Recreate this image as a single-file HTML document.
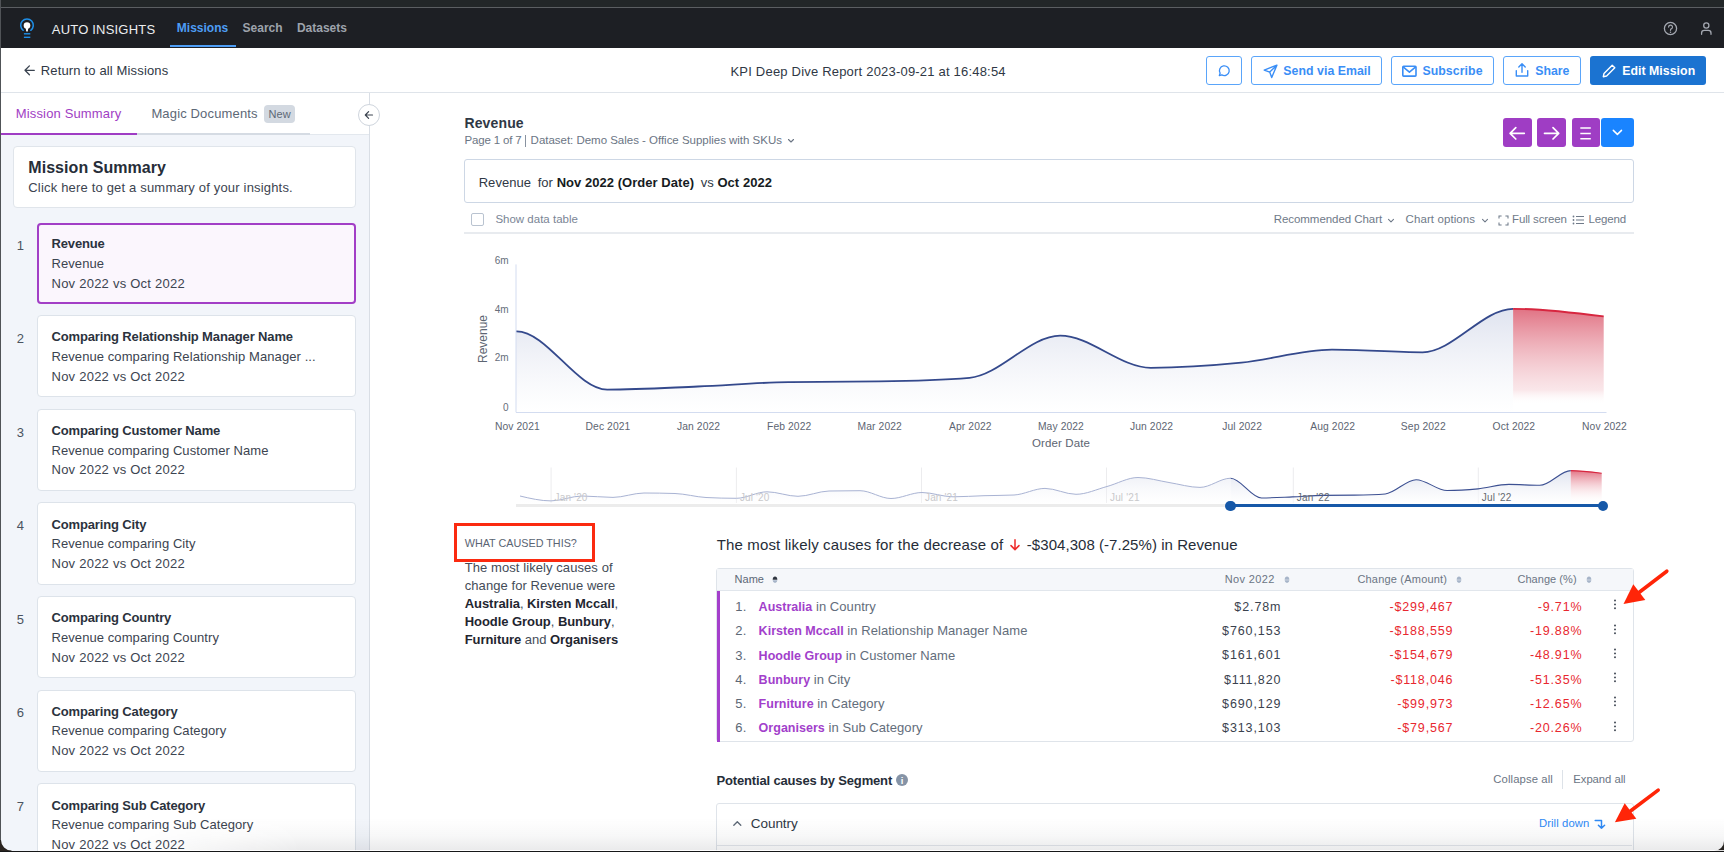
<!DOCTYPE html>
<html><head><meta charset="utf-8"><title>Auto Insights</title>
<style>
html,body{margin:0;padding:0;width:1724px;height:852px;overflow:hidden;background:#2a2622}
body{position:relative;font-family:"Liberation Sans", sans-serif}
.r{position:absolute;display:block}
.t{position:absolute;white-space:nowrap;line-height:1;font-family:"Liberation Sans", sans-serif}
b{font-weight:bold}
</style></head><body>
<div class="r" style="left:0.00px;top:0.00px;width:1724.00px;height:852.00px;background:#2a2622"></div>
<div class="r" style="left:0.00px;top:0.00px;width:1724.00px;height:7.00px;background:#222628"></div>
<div class="r" style="left:0.00px;top:7.00px;width:1724.00px;height:1.00px;background:#5b5e62"></div>
<div class="r" style="left:1.00px;top:8.00px;width:1723.00px;height:843.00px;background:#ffffff;border-bottom-left-radius:10px;border-bottom-right-radius:10px;overflow:hidden"></div>
<div class="r" style="left:0.00px;top:8.00px;width:1724.00px;height:40.00px;background:#1d1f24"></div>
<div class="r" style="left:0.00px;top:0.00px;width:1.00px;height:852.00px;background:#505357"></div>
<svg class="r" style="left:17.00px;top:16.00px;" width="20.00" height="24.00" viewBox="0 0 20.00 24.00"><path d="M6.2,14.3 A6.3,6.3 0 1 1 13.8,14.3" fill="none" stroke="#1e8fe8" stroke-width="1.5" stroke-linecap="round"/><circle cx="10" cy="9.6" r="3.3" fill="#fff"/><path d="M8.6,11.5 L11.4,11.5 L10.7,15.4 L9.3,15.4 Z" fill="#fff"/><rect x="6.9" y="17.1" width="6.4" height="1.4" fill="#1e8fe8"/><rect x="6.9" y="20.6" width="6.4" height="1.4" fill="#1e8fe8"/></svg>
<div class="t" style="left:51.80px;top:22.70px;font-size:13.00px;color:#eceef0;font-weight:normal;letter-spacing:0.200px;">AUTO INSIGHTS</div>
<div class="t" style="left:176.80px;top:21.84px;font-size:12.00px;color:#4d9df5;font-weight:bold;letter-spacing:0.000px;">Missions</div>
<div class="r" style="left:170.00px;top:45.30px;width:66.00px;height:2.00px;background:#4d9df5"></div>
<div class="t" style="left:242.60px;top:21.84px;font-size:12.00px;color:#9ea3ac;font-weight:bold;letter-spacing:0.000px;">Search</div>
<div class="t" style="left:296.90px;top:21.84px;font-size:12.00px;color:#9ea3ac;font-weight:bold;letter-spacing:0.000px;">Datasets</div>
<svg class="r" style="left:1662.00px;top:20.00px;" width="18.00" height="18.00" viewBox="0 0 18.00 18.00"><circle cx="8.5" cy="8.5" r="6.1" fill="none" stroke="#a4a8b1" stroke-width="1.3"/><path d="M6.6,7.1 A1.95,1.95 0 1 1 9.2,8.9 C8.6,9.2 8.5,9.6 8.5,10.3" fill="none" stroke="#a4a8b1" stroke-width="1.2" stroke-linecap="round"/><circle cx="8.5" cy="12.2" r="0.75" fill="#a4a8b1"/></svg>
<svg class="r" style="left:1698.00px;top:18.00px;" width="18.00" height="20.00" viewBox="0 0 18.00 20.00"><circle cx="8.3" cy="7.5" r="2.6" fill="none" stroke="#a4a8b1" stroke-width="1.3"/><path d="M3.6,16.3 V15 C3.6,13.2 4.6,12.4 6.3,12.4 H10.3 C12,12.4 13,13.2 13,15 V16.3" fill="none" stroke="#a4a8b1" stroke-width="1.3" stroke-linecap="round"/></svg>
<svg class="r" style="left:23.00px;top:64.00px;" width="14.00" height="13.00" viewBox="0 0 14.00 13.00"><path d="M11.3,6.3 H2 M6.4,1.9 L2,6.3 L6.4,10.7" fill="none" stroke="#3a4350" stroke-width="1.3" stroke-linecap="round" stroke-linejoin="round"/></svg>
<div class="t" style="left:40.80px;top:64.40px;font-size:13.00px;color:#2f3845;font-weight:normal;letter-spacing:0.150px;">Return to all Missions</div>
<div class="t" style="left:730.50px;top:64.50px;font-size:13.00px;color:#2f3845;font-weight:normal;letter-spacing:0.200px;">KPI Deep Dive Report 2023-09-21 at 16:48:54</div>
<div class="r" style="left:1.00px;top:92.00px;width:1723.00px;height:1.00px;background:#dfe4ea"></div>
<div class="r" style="left:1206.20px;top:56.30px;width:35.80px;height:28.50px;box-sizing:border-box;border:1px solid #5aa5fa;border-radius:3px;background:#fff"></div>
<svg class="r" style="left:1216.40px;top:64.00px;" width="15.00" height="15.00" viewBox="0 0 15.00 15.00"><path d="M3.3,11.6 L4.1,9.2 A4.9,4.9 0 1 1 5.8,10.9 Z" fill="none" stroke="#3a8ef6" stroke-width="1.3" stroke-linejoin="round"/></svg>
<div class="r" style="left:1251.00px;top:56.30px;width:130.70px;height:28.50px;box-sizing:border-box;border:1px solid #5aa5fa;border-radius:3px;background:#fff"></div>
<svg class="r" style="left:1262.00px;top:62.00px;" width="17.00" height="17.00" viewBox="0 0 17.00 17.00"><path d="M14.9,3.2 L2.2,8.1 L7.7,10.1 L9.7,15.5 Z M14.9,3.2 L7.7,10.1" fill="none" stroke="#3a8ef6" stroke-width="1.4" stroke-linejoin="round"/></svg>
<div class="t" style="left:1283.30px;top:65.29px;font-size:12.30px;color:#3a8ef6;font-weight:bold;letter-spacing:0.050px;">Send via Email</div>
<div class="r" style="left:1390.80px;top:56.30px;width:103.00px;height:28.50px;box-sizing:border-box;border:1px solid #5aa5fa;border-radius:3px;background:#fff"></div>
<svg class="r" style="left:1401.00px;top:63.00px;" width="17.00" height="15.00" viewBox="0 0 17.00 15.00"><rect x="1.8" y="3.2" width="13.2" height="9.9" rx="0.8" fill="none" stroke="#3a8ef6" stroke-width="1.6"/><path d="M2.1,3.9 L8.4,9.1 L14.7,3.9" fill="none" stroke="#3a8ef6" stroke-width="1.6" stroke-linejoin="round"/></svg>
<div class="t" style="left:1422.40px;top:65.29px;font-size:12.30px;color:#3a8ef6;font-weight:bold;letter-spacing:0.080px;">Subscribe</div>
<div class="r" style="left:1503.30px;top:56.30px;width:78.00px;height:28.50px;box-sizing:border-box;border:1px solid #5aa5fa;border-radius:3px;background:#fff"></div>
<svg class="r" style="left:1514.00px;top:62.00px;" width="16.00" height="16.00" viewBox="0 0 16.00 16.00"><path d="M8,10.3 V2 M4.8,5 L8,1.8 L11.2,5 M2.3,8.6 V14 H13.7 V8.6" fill="none" stroke="#3a8ef6" stroke-width="1.4" stroke-linecap="round" stroke-linejoin="round"/></svg>
<div class="t" style="left:1535.20px;top:65.29px;font-size:12.30px;color:#3a8ef6;font-weight:bold;letter-spacing:0.000px;">Share</div>
<div class="r" style="left:1590.30px;top:56.30px;width:116.10px;height:28.50px;border-radius:3px;background:#1b73d1"></div>
<svg class="r" style="left:1601.30px;top:63.00px;" width="16.00" height="16.00" viewBox="0 0 16.00 16.00"><path d="M11.2,2.2 L13.8,4.8 L5.6,13 L2.3,13.7 L3,10.4 Z" fill="none" stroke="#fff" stroke-width="1.4" stroke-linejoin="round"/></svg>
<div class="t" style="left:1622.20px;top:65.29px;font-size:12.30px;color:#ffffff;font-weight:bold;letter-spacing:0.050px;">Edit Mission</div>
<div class="r" style="left:1.00px;top:93.00px;width:368.00px;height:758.00px;background:#f2f5fa"></div>
<div class="r" style="left:1.00px;top:93.00px;width:368.00px;height:41.50px;background:#ffffff"></div>
<div class="r" style="left:1.00px;top:134.00px;width:368.00px;height:1.00px;background:#e3e8ee"></div>
<div class="r" style="left:1.00px;top:133.00px;width:308.50px;height:2.00px;background:#d5dbe3"></div>
<div class="r" style="left:1.00px;top:133.00px;width:136.00px;height:2.00px;background:#9f3dc4"></div>
<div class="r" style="left:369.00px;top:93.00px;width:1.00px;height:758.00px;background:#d9dee5"></div>
<div class="t" style="left:15.80px;top:106.70px;font-size:13.00px;color:#9f3dc4;font-weight:normal;letter-spacing:0.150px;">Mission Summary</div>
<div class="t" style="left:151.40px;top:106.80px;font-size:13.00px;color:#5d6876;font-weight:normal;letter-spacing:0.150px;">Magic Documents</div>
<div class="r" style="left:263.80px;top:105.30px;width:31.00px;height:17.60px;background:#d3d9e1;border-radius:4px"></div>
<div class="t" style="left:268.50px;top:108.69px;font-size:11.00px;color:#5d6876;font-weight:normal;letter-spacing:0.100px;">New</div>
<div class="r" style="left:357.80px;top:103.60px;width:22.00px;height:22.00px;box-sizing:border-box;border:1px solid #cfd5dd;border-radius:50%;background:#fff"></div>
<svg class="r" style="left:362.00px;top:108.00px;" width="14.00" height="14.00" viewBox="0 0 14.00 14.00"><path d="M10.5,7 H3.3 M6.6,3.7 L3.3,7 L6.6,10.3" fill="none" stroke="#3c4450" stroke-width="1.2" stroke-linecap="round" stroke-linejoin="round"/></svg>
<div class="r" style="left:13.30px;top:146.40px;width:343.00px;height:62.00px;box-sizing:border-box;border:1px solid #e0e5eb;border-radius:4px;background:#fff"></div>
<div class="t" style="left:28.30px;top:159.76px;font-size:16.00px;color:#262d38;font-weight:bold;letter-spacing:0.050px;">Mission Summary</div>
<div class="t" style="left:28.30px;top:181.10px;font-size:13.00px;color:#3c4450;font-weight:normal;letter-spacing:0.180px;">Click here to get a summary of your insights.</div>
<div class="r" style="left:37.00px;top:222.90px;width:319.20px;height:80.90px;box-sizing:border-box;border:2px solid #a23fc6;border-radius:4px;background:#fbf6fd"></div>
<div class="t" style="left:16.80px;top:238.80px;font-size:13.00px;color:#4a5360;font-weight:normal;letter-spacing:0.000px;">1</div>
<div class="t" style="left:51.50px;top:237.30px;font-size:13.00px;color:#2b323d;font-weight:bold;letter-spacing:-0.140px;">Revenue</div>
<div class="t" style="left:51.50px;top:256.90px;font-size:13.00px;color:#3c4450;font-weight:normal;letter-spacing:0.080px;">Revenue</div>
<div class="t" style="left:51.50px;top:276.70px;font-size:13.00px;color:#3c4450;font-weight:normal;letter-spacing:0.240px;">Nov 2022 vs Oct 2022</div>
<div class="r" style="left:36.50px;top:315.20px;width:319.70px;height:82.30px;box-sizing:border-box;border:1px solid #dde3ea;border-radius:4px;background:#fff"></div>
<div class="t" style="left:16.80px;top:331.90px;font-size:13.00px;color:#4a5360;font-weight:normal;letter-spacing:0.000px;">2</div>
<div class="t" style="left:51.50px;top:330.40px;font-size:13.00px;color:#2b323d;font-weight:bold;letter-spacing:-0.140px;">Comparing Relationship Manager Name</div>
<div class="t" style="left:51.50px;top:350.00px;font-size:13.00px;color:#3c4450;font-weight:normal;letter-spacing:0.080px;">Revenue comparing Relationship Manager ...</div>
<div class="t" style="left:51.50px;top:369.80px;font-size:13.00px;color:#3c4450;font-weight:normal;letter-spacing:0.240px;">Nov 2022 vs Oct 2022</div>
<div class="r" style="left:36.50px;top:408.82px;width:319.70px;height:82.30px;box-sizing:border-box;border:1px solid #dde3ea;border-radius:4px;background:#fff"></div>
<div class="t" style="left:16.80px;top:425.52px;font-size:13.00px;color:#4a5360;font-weight:normal;letter-spacing:0.000px;">3</div>
<div class="t" style="left:51.50px;top:424.02px;font-size:13.00px;color:#2b323d;font-weight:bold;letter-spacing:-0.140px;">Comparing Customer Name</div>
<div class="t" style="left:51.50px;top:443.62px;font-size:13.00px;color:#3c4450;font-weight:normal;letter-spacing:0.080px;">Revenue comparing Customer Name</div>
<div class="t" style="left:51.50px;top:463.42px;font-size:13.00px;color:#3c4450;font-weight:normal;letter-spacing:0.240px;">Nov 2022 vs Oct 2022</div>
<div class="r" style="left:36.50px;top:502.44px;width:319.70px;height:82.30px;box-sizing:border-box;border:1px solid #dde3ea;border-radius:4px;background:#fff"></div>
<div class="t" style="left:16.80px;top:519.14px;font-size:13.00px;color:#4a5360;font-weight:normal;letter-spacing:0.000px;">4</div>
<div class="t" style="left:51.50px;top:517.64px;font-size:13.00px;color:#2b323d;font-weight:bold;letter-spacing:-0.140px;">Comparing City</div>
<div class="t" style="left:51.50px;top:537.24px;font-size:13.00px;color:#3c4450;font-weight:normal;letter-spacing:0.080px;">Revenue comparing City</div>
<div class="t" style="left:51.50px;top:557.04px;font-size:13.00px;color:#3c4450;font-weight:normal;letter-spacing:0.240px;">Nov 2022 vs Oct 2022</div>
<div class="r" style="left:36.50px;top:596.06px;width:319.70px;height:82.30px;box-sizing:border-box;border:1px solid #dde3ea;border-radius:4px;background:#fff"></div>
<div class="t" style="left:16.80px;top:612.76px;font-size:13.00px;color:#4a5360;font-weight:normal;letter-spacing:0.000px;">5</div>
<div class="t" style="left:51.50px;top:611.26px;font-size:13.00px;color:#2b323d;font-weight:bold;letter-spacing:-0.140px;">Comparing Country</div>
<div class="t" style="left:51.50px;top:630.86px;font-size:13.00px;color:#3c4450;font-weight:normal;letter-spacing:0.080px;">Revenue comparing Country</div>
<div class="t" style="left:51.50px;top:650.66px;font-size:13.00px;color:#3c4450;font-weight:normal;letter-spacing:0.240px;">Nov 2022 vs Oct 2022</div>
<div class="r" style="left:36.50px;top:689.68px;width:319.70px;height:82.30px;box-sizing:border-box;border:1px solid #dde3ea;border-radius:4px;background:#fff"></div>
<div class="t" style="left:16.80px;top:706.38px;font-size:13.00px;color:#4a5360;font-weight:normal;letter-spacing:0.000px;">6</div>
<div class="t" style="left:51.50px;top:704.88px;font-size:13.00px;color:#2b323d;font-weight:bold;letter-spacing:-0.140px;">Comparing Category</div>
<div class="t" style="left:51.50px;top:724.48px;font-size:13.00px;color:#3c4450;font-weight:normal;letter-spacing:0.080px;">Revenue comparing Category</div>
<div class="t" style="left:51.50px;top:744.28px;font-size:13.00px;color:#3c4450;font-weight:normal;letter-spacing:0.240px;">Nov 2022 vs Oct 2022</div>
<div class="r" style="left:36.50px;top:783.30px;width:319.70px;height:82.30px;box-sizing:border-box;border:1px solid #dde3ea;border-radius:4px;background:#fff"></div>
<div class="t" style="left:16.80px;top:800.00px;font-size:13.00px;color:#4a5360;font-weight:normal;letter-spacing:0.000px;">7</div>
<div class="t" style="left:51.50px;top:798.50px;font-size:13.00px;color:#2b323d;font-weight:bold;letter-spacing:-0.140px;">Comparing Sub Category</div>
<div class="t" style="left:51.50px;top:818.10px;font-size:13.00px;color:#3c4450;font-weight:normal;letter-spacing:0.080px;">Revenue comparing Sub Category</div>
<div class="t" style="left:51.50px;top:837.90px;font-size:13.00px;color:#3c4450;font-weight:normal;letter-spacing:0.240px;">Nov 2022 vs Oct 2022</div>
<div class="t" style="left:464.40px;top:115.75px;font-size:14.00px;color:#2f3845;font-weight:bold;letter-spacing:0.150px;">Revenue</div>
<div class="t" style="left:464.40px;top:135.07px;font-size:11.50px;color:#6b7584;font-weight:normal;letter-spacing:-0.150px;">Page 1 of 7</div>
<div class="r" style="left:525.10px;top:135.20px;width:1.00px;height:12.20px;background:#8892a0"></div>
<div class="t" style="left:530.60px;top:135.07px;font-size:11.50px;color:#6b7584;font-weight:normal;letter-spacing:-0.020px;">Dataset: Demo Sales - Office Supplies with SKUs</div>
<svg class="r" style="left:786.00px;top:137.00px;" width="10.00" height="8.00" viewBox="0 0 10.00 8.00"><path d="M2.5,2.5 L5,5 L7.5,2.5" fill="none" stroke="#6b7584" stroke-width="1.1" stroke-linecap="round" stroke-linejoin="round"/></svg>
<div class="r" style="left:1503.00px;top:118.20px;width:29.00px;height:28.70px;background:#9f3dc4;border-radius:3px"></div>
<svg class="r" style="left:1503.00px;top:118.60px;" width="29.00" height="28.70" viewBox="0 0 29.00 28.70"><path d="M21.3,14.3 H7.3 M12.8,8.6 L7.1,14.3 L12.8,20" fill="none" stroke="#fff" stroke-width="1.7" stroke-linecap="round" stroke-linejoin="round"/></svg>
<div class="r" style="left:1537.10px;top:118.20px;width:28.80px;height:28.70px;background:#9f3dc4;border-radius:3px"></div>
<svg class="r" style="left:1537.10px;top:118.60px;" width="29.00" height="28.70" viewBox="0 0 29.00 28.70"><path d="M7.5,14.3 H21.5 M16,8.6 L21.7,14.3 L16,20" fill="none" stroke="#fff" stroke-width="1.7" stroke-linecap="round" stroke-linejoin="round"/></svg>
<div class="r" style="left:1571.50px;top:118.20px;width:28.50px;height:28.70px;background:#9f3dc4;border-radius:3px"></div>
<svg class="r" style="left:1571.10px;top:118.60px;" width="29.00" height="28.70" viewBox="0 0 29.00 28.70"><path d="M9.3,9 H19.8 M9.3,14.5 H19.8 M9.3,19.8 H19.8" fill="none" stroke="#fff" stroke-width="1.6"/></svg>
<div class="r" style="left:1600.90px;top:118.20px;width:32.80px;height:28.70px;background:#1a84ff;border-radius:3px"></div>
<svg class="r" style="left:1600.90px;top:118.20px;" width="32.50" height="28.70" viewBox="0 0 32.50 28.70"><path d="M12.3,12.4 L16.4,16.4 L20.5,12.4" fill="none" stroke="#fff" stroke-width="1.5" stroke-linecap="round" stroke-linejoin="round"/></svg>
<div class="r" style="left:463.90px;top:158.90px;width:1169.80px;height:44.50px;box-sizing:border-box;border:1px solid #cdd7e5;border-radius:3px;background:#fff"></div>
<div class="t" style="left:478.70px;top:175.90px;font-size:13.00px;color:#2f3845;font-weight:normal;letter-spacing:0.040px;">Revenue <span style="margin-left:3px">for</span> <b style="color:#161b22">Nov 2022 (Order Date)</b> <span style="margin-left:3px">vs</span> <b style="color:#161b22">Oct 2022</b></div>
<div class="r" style="left:471.20px;top:213.00px;width:13.00px;height:12.50px;box-sizing:border-box;border:1px solid #b9c3d0;border-radius:2px;background:#fff"></div>
<div class="t" style="left:495.40px;top:214.27px;font-size:11.50px;color:#7a8595;font-weight:normal;letter-spacing:0.000px;">Show data table</div>
<div class="t" style="left:1273.70px;top:214.47px;font-size:11.50px;color:#6f7a89;font-weight:normal;letter-spacing:-0.050px;">Recommended Chart</div>
<svg class="r" style="left:1386.00px;top:217.00px;" width="10.00" height="8.00" viewBox="0 0 10.00 8.00"><path d="M2.5,2.3 L5,4.8 L7.5,2.3" fill="none" stroke="#6f7a89" stroke-width="1.1" stroke-linecap="round" stroke-linejoin="round"/></svg>
<div class="t" style="left:1405.50px;top:214.47px;font-size:11.50px;color:#6f7a89;font-weight:normal;letter-spacing:0.100px;">Chart options</div>
<svg class="r" style="left:1479.50px;top:217.00px;" width="10.00" height="8.00" viewBox="0 0 10.00 8.00"><path d="M2.5,2.3 L5,4.8 L7.5,2.3" fill="none" stroke="#6f7a89" stroke-width="1.1" stroke-linecap="round" stroke-linejoin="round"/></svg>
<svg class="r" style="left:1497.50px;top:214.50px;" width="11.00" height="11.00" viewBox="0 0 11.00 11.00"><path d="M1,3.6 V1 H3.6 M7.4,1 H10 V3.6 M10,7.4 V10 H7.4 M3.6,10 H1 V7.4" fill="none" stroke="#6f7a89" stroke-width="1.05"/></svg>
<div class="t" style="left:1512.00px;top:214.47px;font-size:11.50px;color:#6f7a89;font-weight:normal;letter-spacing:-0.130px;">Full screen</div>
<svg class="r" style="left:1572.00px;top:214.00px;" width="13.00" height="12.00" viewBox="0 0 13.00 12.00"><path d="M4,2.5 H12 M4,6 H12 M4,9.5 H12" stroke="#6f7a89" stroke-width="1.1"/><circle cx="1.5" cy="2.5" r="0.9" fill="#6f7a89"/><circle cx="1.5" cy="6" r="0.9" fill="#6f7a89"/><circle cx="1.5" cy="9.5" r="0.9" fill="#6f7a89"/></svg>
<div class="t" style="left:1588.40px;top:214.47px;font-size:11.50px;color:#6f7a89;font-weight:normal;letter-spacing:-0.100px;">Legend</div>
<div class="r" style="left:464.00px;top:232.00px;width:1169.50px;height:1.60px;background:#e8ebef"></div>
<svg class="r" style="left:0.00px;top:0.00px;pointer-events:none" width="1724.00" height="852.00" viewBox="0 0 1724.00 852.00"><defs><linearGradient id="gb" x1="0" y1="0" x2="0" y2="1"><stop offset="0" stop-color="#dfe3ef"/><stop offset="1" stop-color="#ffffff" stop-opacity="0.6"/></linearGradient><linearGradient id="gr" x1="0" y1="0" x2="0" y2="1"><stop offset="0" stop-color="#db5a6e" stop-opacity="0.85"/><stop offset="0.85" stop-color="#f2c2c9" stop-opacity="0.4"/><stop offset="1" stop-color="#ffffff" stop-opacity="0"/></linearGradient><linearGradient id="gbm" x1="0" y1="0" x2="0" y2="1"><stop offset="0" stop-color="#dfe3ef"/><stop offset="1" stop-color="#ffffff" stop-opacity="0.5"/></linearGradient><linearGradient id="grm" x1="0" y1="0" x2="0" y2="1"><stop offset="0" stop-color="#dd5c70" stop-opacity="0.85"/><stop offset="1" stop-color="#ffffff" stop-opacity="0"/></linearGradient></defs><clipPath id="cp"><rect x="516" y="240" width="1100" height="180"/></clipPath><g clip-path="url(#cp)"><path d="M426.01,358.50 C456.21,344.90 486.40,331.30 516.60,331.30 C546.80,331.30 576.99,389.60 607.19,389.60 C637.39,389.60 667.59,387.75 697.78,386.50 C727.98,385.25 758.18,382.57 788.38,382.10 C818.57,381.63 848.77,381.87 878.97,381.40 C909.16,380.93 939.36,380.20 969.56,377.80 C999.76,375.40 1029.95,335.60 1060.15,335.60 C1090.35,335.60 1120.54,367.80 1150.74,367.80 C1180.94,367.80 1211.14,365.73 1241.33,362.70 C1271.53,359.67 1301.73,349.60 1331.92,349.60 C1362.12,349.60 1392.32,352.30 1422.52,352.30 C1452.71,352.30 1482.91,308.80 1513.11,308.80 L1513.11,412.30 L426.01,412.30 Z" fill="url(#gb)"/><path d="M1513.11,308.80 C1543.31,308.80 1573.50,312.60 1603.70,316.40 L1603.70,404.30 L1513.11,404.30 Z" fill="url(#gr)"/><path d="M426.01,358.50 C456.21,344.90 486.40,331.30 516.60,331.30 C546.80,331.30 576.99,389.60 607.19,389.60 C637.39,389.60 667.59,387.75 697.78,386.50 C727.98,385.25 758.18,382.57 788.38,382.10 C818.57,381.63 848.77,381.87 878.97,381.40 C909.16,380.93 939.36,380.20 969.56,377.80 C999.76,375.40 1029.95,335.60 1060.15,335.60 C1090.35,335.60 1120.54,367.80 1150.74,367.80 C1180.94,367.80 1211.14,365.73 1241.33,362.70 C1271.53,359.67 1301.73,349.60 1331.92,349.60 C1362.12,349.60 1392.32,352.30 1422.52,352.30 C1452.71,352.30 1482.91,308.80 1513.11,308.80" fill="none" stroke="#34498c" stroke-width="1.8"/><path d="M1513.11,308.80 C1543.31,308.80 1573.50,312.60 1603.70,316.40" fill="none" stroke="#d7263f" stroke-width="1.8"/></g><line x1="516" y1="264.4" x2="516" y2="412.3" stroke="#d3dcf0" stroke-width="1"/><line x1="516" y1="412.5" x2="1606.5" y2="412.5" stroke="#d3dcf0" stroke-width="1"/></svg>
<div class="t" style="right:1215.40px;top:255.53px;font-size:10.00px;color:#666e7a;font-weight:normal;letter-spacing:0.000px;">6m</div>
<div class="t" style="right:1215.40px;top:304.64px;font-size:10.00px;color:#666e7a;font-weight:normal;letter-spacing:0.000px;">4m</div>
<div class="t" style="right:1215.40px;top:353.34px;font-size:10.00px;color:#666e7a;font-weight:normal;letter-spacing:0.000px;">2m</div>
<div class="t" style="right:1215.40px;top:402.84px;font-size:10.00px;color:#666e7a;font-weight:normal;letter-spacing:0.000px;">0</div>
<div class="t" style="left:517.40px;transform:translateX(-50%);top:421.88px;font-size:10.30px;color:#5d6572;font-weight:normal;letter-spacing:0.100px;">Nov 2021</div>
<div class="t" style="left:607.99px;transform:translateX(-50%);top:421.88px;font-size:10.30px;color:#5d6572;font-weight:normal;letter-spacing:0.100px;">Dec 2021</div>
<div class="t" style="left:698.58px;transform:translateX(-50%);top:421.88px;font-size:10.30px;color:#5d6572;font-weight:normal;letter-spacing:0.100px;">Jan 2022</div>
<div class="t" style="left:789.17px;transform:translateX(-50%);top:421.88px;font-size:10.30px;color:#5d6572;font-weight:normal;letter-spacing:0.100px;">Feb 2022</div>
<div class="t" style="left:879.77px;transform:translateX(-50%);top:421.88px;font-size:10.30px;color:#5d6572;font-weight:normal;letter-spacing:0.100px;">Mar 2022</div>
<div class="t" style="left:970.36px;transform:translateX(-50%);top:421.88px;font-size:10.30px;color:#5d6572;font-weight:normal;letter-spacing:0.100px;">Apr 2022</div>
<div class="t" style="left:1060.95px;transform:translateX(-50%);top:421.88px;font-size:10.30px;color:#5d6572;font-weight:normal;letter-spacing:0.100px;">May 2022</div>
<div class="t" style="left:1151.54px;transform:translateX(-50%);top:421.88px;font-size:10.30px;color:#5d6572;font-weight:normal;letter-spacing:0.100px;">Jun 2022</div>
<div class="t" style="left:1242.13px;transform:translateX(-50%);top:421.88px;font-size:10.30px;color:#5d6572;font-weight:normal;letter-spacing:0.100px;">Jul 2022</div>
<div class="t" style="left:1332.72px;transform:translateX(-50%);top:421.88px;font-size:10.30px;color:#5d6572;font-weight:normal;letter-spacing:0.100px;">Aug 2022</div>
<div class="t" style="left:1423.32px;transform:translateX(-50%);top:421.88px;font-size:10.30px;color:#5d6572;font-weight:normal;letter-spacing:0.100px;">Sep 2022</div>
<div class="t" style="left:1513.91px;transform:translateX(-50%);top:421.88px;font-size:10.30px;color:#5d6572;font-weight:normal;letter-spacing:0.100px;">Oct 2022</div>
<div class="t" style="left:1604.50px;transform:translateX(-50%);top:421.88px;font-size:10.30px;color:#5d6572;font-weight:normal;letter-spacing:0.100px;">Nov 2022</div>
<div class="t" style="left:1061.00px;transform:translateX(-50%);top:437.57px;font-size:11.50px;color:#5d6572;font-weight:normal;letter-spacing:0.100px;">Order Date</div>
<div class="t" style="left:482.8px;top:338.5px;font-size:12px;color:#5d6572;letter-spacing:0px;transform:translate(-50%,-50%) rotate(-90deg)">Revenue</div>
<svg class="r" style="left:0.00px;top:0.00px;pointer-events:none" width="1724.00" height="852.00" viewBox="0 0 1724.00 852.00"><line x1="551.1" y1="467.5" x2="551.1" y2="503" stroke="#ececee" stroke-width="1"/><line x1="736.4" y1="467.5" x2="736.4" y2="503" stroke="#ececee" stroke-width="1"/><line x1="921.5" y1="467.5" x2="921.5" y2="503" stroke="#ececee" stroke-width="1"/><line x1="1106.5" y1="467.5" x2="1106.5" y2="503" stroke="#ececee" stroke-width="1"/><line x1="1293.3" y1="467.5" x2="1293.3" y2="503" stroke="#ececee" stroke-width="1"/><line x1="1478.3" y1="467.5" x2="1478.3" y2="503" stroke="#ececee" stroke-width="1"/><path d="M520.00,496.00 C530.33,498.45 540.67,500.90 551.00,500.90 C561.33,500.90 571.67,496.00 582.00,496.00 C592.33,496.00 602.67,497.40 613.00,497.40 C623.33,497.40 633.67,493.00 644.00,493.00 C654.33,493.00 664.67,493.17 675.00,493.50 C685.33,493.83 695.67,496.96 706.00,497.50 C716.13,498.03 726.27,498.30 736.40,498.30 C746.60,498.30 756.80,491.80 767.00,491.80 C777.33,491.80 787.67,496.30 798.00,496.30 C808.33,496.30 818.67,491.20 829.00,491.00 C839.33,490.80 849.67,490.70 860.00,490.70 C870.33,490.70 880.67,498.50 891.00,498.50 C901.33,498.50 911.67,492.50 922.00,492.50 C932.33,492.50 942.67,496.80 953.00,496.80 C963.33,496.80 973.67,496.00 984.00,495.70 C994.00,495.41 1004.00,495.47 1014.00,495.00 C1024.33,494.52 1034.67,488.40 1045.00,488.40 C1055.33,488.40 1065.67,494.30 1076.00,494.30 C1086.33,494.30 1096.67,489.30 1107.00,486.50 C1117.33,483.70 1127.67,477.50 1138.00,477.50 C1148.33,477.50 1158.67,480.85 1169.00,482.50 C1179.33,484.15 1189.67,487.40 1200.00,487.40 C1210.20,487.40 1220.40,478.22 1230.60,478.22 L1230.60,504.00 L520.00,504.00 Z" fill="url(#gbm)" opacity="0.45"/><path d="M1230.60,478.22 C1240.91,478.22 1251.22,497.93 1261.52,497.93 C1271.83,497.93 1282.14,497.30 1292.45,496.88 C1302.76,496.46 1313.07,495.55 1323.38,495.39 C1333.68,495.23 1343.99,495.31 1354.30,495.16 C1364.61,495.00 1374.92,494.75 1385.22,493.94 C1395.53,493.13 1405.84,479.68 1416.15,479.68 C1426.46,479.68 1436.77,490.56 1447.08,490.56 C1457.38,490.56 1467.69,489.86 1478.00,488.84 C1488.31,487.81 1498.62,484.41 1508.92,484.41 C1519.23,484.41 1529.54,485.32 1539.85,485.32 C1550.16,485.32 1560.47,470.62 1570.78,470.62 L1570.78,504.00 L1230.60,504.00 Z" fill="url(#gbm)"/><path d="M1570.78,470.62 C1581.08,470.62 1591.39,471.90 1601.70,473.19 L1601.70,504.00 L1570.78,504.00 Z" fill="url(#grm)"/><path d="M520.00,496.00 C530.33,498.45 540.67,500.90 551.00,500.90 C561.33,500.90 571.67,496.00 582.00,496.00 C592.33,496.00 602.67,497.40 613.00,497.40 C623.33,497.40 633.67,493.00 644.00,493.00 C654.33,493.00 664.67,493.17 675.00,493.50 C685.33,493.83 695.67,496.96 706.00,497.50 C716.13,498.03 726.27,498.30 736.40,498.30 C746.60,498.30 756.80,491.80 767.00,491.80 C777.33,491.80 787.67,496.30 798.00,496.30 C808.33,496.30 818.67,491.20 829.00,491.00 C839.33,490.80 849.67,490.70 860.00,490.70 C870.33,490.70 880.67,498.50 891.00,498.50 C901.33,498.50 911.67,492.50 922.00,492.50 C932.33,492.50 942.67,496.80 953.00,496.80 C963.33,496.80 973.67,496.00 984.00,495.70 C994.00,495.41 1004.00,495.47 1014.00,495.00 C1024.33,494.52 1034.67,488.40 1045.00,488.40 C1055.33,488.40 1065.67,494.30 1076.00,494.30 C1086.33,494.30 1096.67,489.30 1107.00,486.50 C1117.33,483.70 1127.67,477.50 1138.00,477.50 C1148.33,477.50 1158.67,480.85 1169.00,482.50 C1179.33,484.15 1189.67,487.40 1200.00,487.40 C1210.20,487.40 1220.40,478.22 1230.60,478.22" fill="none" stroke="#a9b3d3" stroke-width="1"/><path d="M1230.60,478.22 C1240.91,478.22 1251.22,497.93 1261.52,497.93 C1271.83,497.93 1282.14,497.30 1292.45,496.88 C1302.76,496.46 1313.07,495.55 1323.38,495.39 C1333.68,495.23 1343.99,495.31 1354.30,495.16 C1364.61,495.00 1374.92,494.75 1385.22,493.94 C1395.53,493.13 1405.84,479.68 1416.15,479.68 C1426.46,479.68 1436.77,490.56 1447.08,490.56 C1457.38,490.56 1467.69,489.86 1478.00,488.84 C1488.31,487.81 1498.62,484.41 1508.92,484.41 C1519.23,484.41 1529.54,485.32 1539.85,485.32 C1550.16,485.32 1560.47,470.62 1570.78,470.62" fill="none" stroke="#3c5092" stroke-width="1.1"/><path d="M1570.78,470.62 C1581.08,470.62 1591.39,471.90 1601.70,473.19" fill="none" stroke="#d7263f" stroke-width="1.1"/><defs><linearGradient id="gbm2"></linearGradient></defs></svg>
<div class="t" style="left:554.60px;top:492.94px;font-size:10.00px;color:#c9c9cb;font-weight:normal;letter-spacing:0.150px;">Jan '20</div>
<div class="t" style="left:739.90px;top:492.94px;font-size:10.00px;color:#c9c9cb;font-weight:normal;letter-spacing:0.150px;">Jul '20</div>
<div class="t" style="left:925.00px;top:492.94px;font-size:10.00px;color:#c9c9cb;font-weight:normal;letter-spacing:0.150px;">Jan '21</div>
<div class="t" style="left:1110.00px;top:492.94px;font-size:10.00px;color:#c9c9cb;font-weight:normal;letter-spacing:0.150px;">Jul '21</div>
<div class="t" style="left:1296.80px;top:492.94px;font-size:10.00px;color:#666a70;font-weight:normal;letter-spacing:0.150px;">Jan '22</div>
<div class="t" style="left:1481.80px;top:492.94px;font-size:10.00px;color:#666a70;font-weight:normal;letter-spacing:0.150px;">Jul '22</div>
<div class="r" style="left:516.30px;top:504.30px;width:714.00px;height:3.00px;background:#ececec"></div>
<div class="r" style="left:1230.60px;top:504.30px;width:373.00px;height:3.20px;background:#1658a8"></div>
<div class="r" style="left:1225.30px;top:500.50px;width:10.60px;height:10.60px;background:#1658a8;border-radius:50%"></div>
<div class="r" style="left:1597.90px;top:500.50px;width:10.60px;height:10.60px;background:#1658a8;border-radius:50%"></div>
<div class="r" style="left:454.00px;top:523.00px;width:141.20px;height:38.80px;box-sizing:border-box;border:3.8px solid #fb2a10"></div>
<div class="t" style="left:464.70px;top:537.86px;font-size:10.80px;color:#5a6473;font-weight:normal;letter-spacing:0.000px;">WHAT CAUSED THIS?</div>
<div class="t" style="left:464.70px;top:561.00px;font-size:13.00px;color:#444c58;font-weight:normal;letter-spacing:0.080px;">The most likely causes of</div>
<div class="t" style="left:464.70px;top:578.90px;font-size:13.00px;color:#444c58;font-weight:normal;letter-spacing:0.080px;">change for Revenue were</div>
<div class="t" style="left:464.70px;top:596.80px;font-size:13.00px;color:#444c58;font-weight:normal;letter-spacing:-0.050px;"><b style="color:#1f2630">Australia</b>, <b style="color:#1f2630">Kirsten Mccall</b>,</div>
<div class="t" style="left:464.70px;top:614.70px;font-size:13.00px;color:#444c58;font-weight:normal;letter-spacing:-0.050px;"><b style="color:#1f2630">Hoodle Group</b>, <b style="color:#1f2630">Bunbury</b>,</div>
<div class="t" style="left:464.70px;top:632.60px;font-size:13.00px;color:#444c58;font-weight:normal;letter-spacing:-0.050px;"><b style="color:#1f2630">Furniture</b> and <b style="color:#1f2630">Organisers</b></div>
<div class="t" style="left:716.80px;top:537.30px;font-size:15.00px;color:#262d38;font-weight:normal;letter-spacing:0.130px;">The most likely causes for the decrease of</div>
<svg class="r" style="left:1008.00px;top:538.00px;" width="14.00" height="14.00" viewBox="0 0 14.00 14.00"><path d="M7,1.8 V11.6 M3,7.6 L7,11.6 L11,7.6" fill="none" stroke="#ee2a2a" stroke-width="1.5" stroke-linecap="round" stroke-linejoin="round"/></svg>
<div class="t" style="left:1026.80px;top:537.30px;font-size:15.00px;color:#262d38;font-weight:normal;letter-spacing:0.050px;">-$304,308 (-7.25%) in Revenue</div>
<div class="r" style="left:716.30px;top:568.30px;width:917.50px;height:174.00px;box-sizing:border-box;border:1px solid #dfe4ea;border-radius:3px;background:#fff"></div>
<div class="r" style="left:717.30px;top:569.30px;width:915.50px;height:21.50px;background:#f5f7fa"></div>
<div class="r" style="left:717.30px;top:590.30px;width:915.00px;height:1.00px;background:#e1e6ec"></div>
<div class="r" style="left:716.50px;top:590.80px;width:3.00px;height:151.00px;background:#a43fcb"></div>
<div class="t" style="left:734.60px;top:573.79px;font-size:11.00px;color:#5d6876;font-weight:normal;letter-spacing:0.000px;">Name</div>
<svg class="r" style="left:772.30px;top:575.60px;" width="6.00" height="8.00" viewBox="0 0 6.00 8.00"><path d="M0.6,3.7 Q0.9,0.6 3,0.6 Q5.1,0.6 5.4,3.7 Z" fill="#2f3640"/><path d="M0.6,4.3 Q0.9,7.1 3,7.1 Q5.1,7.1 5.4,4.3 Z" fill="#a6b4c8"/></svg>
<div class="t" style="right:449.40px;top:573.79px;font-size:11.00px;color:#6b7584;font-weight:normal;letter-spacing:0.350px;">Nov 2022</div>
<svg class="r" style="left:1284.40px;top:575.90px;" width="6.00" height="8.00" viewBox="0 0 6.00 8.00"><path d="M0.6,3.7 Q0.9,0.6 3,0.6 Q5.1,0.6 5.4,3.7 Z" fill="#a6b4c8"/><path d="M0.6,4.3 Q0.9,7.1 3,7.1 Q5.1,7.1 5.4,4.3 Z" fill="#a6b4c8"/></svg>
<div class="t" style="right:276.80px;top:573.79px;font-size:11.00px;color:#6b7584;font-weight:normal;letter-spacing:0.200px;">Change (Amount)</div>
<svg class="r" style="left:1456.10px;top:575.90px;" width="6.00" height="8.00" viewBox="0 0 6.00 8.00"><path d="M0.6,3.7 Q0.9,0.6 3,0.6 Q5.1,0.6 5.4,3.7 Z" fill="#a6b4c8"/><path d="M0.6,4.3 Q0.9,7.1 3,7.1 Q5.1,7.1 5.4,4.3 Z" fill="#a6b4c8"/></svg>
<div class="t" style="right:147.40px;top:573.79px;font-size:11.00px;color:#6b7584;font-weight:normal;letter-spacing:0.050px;">Change (%)</div>
<svg class="r" style="left:1585.60px;top:575.90px;" width="6.00" height="8.00" viewBox="0 0 6.00 8.00"><path d="M0.6,3.7 Q0.9,0.6 3,0.6 Q5.1,0.6 5.4,3.7 Z" fill="#a6b4c8"/><path d="M0.6,4.3 Q0.9,7.1 3,7.1 Q5.1,7.1 5.4,4.3 Z" fill="#a6b4c8"/></svg>
<div class="t" style="left:735.30px;top:600.00px;font-size:13.00px;color:#5d6876;font-weight:normal;letter-spacing:0.300px;">1.</div>
<div class="t" style="left:758.60px;top:600.00px;font-size:13.00px;color:#636d7b;font-weight:normal;letter-spacing:0.060px;"><b style="color:#a23fcb;font-size:12.5px;letter-spacing:0.02px">Australia</b> in Country</div>
<div class="t" style="right:442.60px;top:600.82px;font-size:12.50px;color:#3a424e;font-weight:normal;letter-spacing:0.900px;">$2.78m</div>
<div class="t" style="right:270.60px;top:600.82px;font-size:12.50px;color:#e8282f;font-weight:normal;letter-spacing:0.850px;">-$299,467</div>
<div class="t" style="right:141.60px;top:600.82px;font-size:12.50px;color:#e8282f;font-weight:normal;letter-spacing:0.850px;">-9.71%</div>
<svg class="r" style="left:1611.60px;top:598.30px;" width="6.00" height="14.00" viewBox="0 0 6.00 14.00"><circle cx="3" cy="2.5" r="0.95" fill="#3c4450"/><circle cx="3" cy="6.4" r="0.95" fill="#3c4450"/><circle cx="3" cy="10.3" r="0.95" fill="#3c4450"/></svg>
<div class="t" style="left:735.30px;top:624.28px;font-size:13.00px;color:#5d6876;font-weight:normal;letter-spacing:0.300px;">2.</div>
<div class="t" style="left:758.60px;top:624.28px;font-size:13.00px;color:#636d7b;font-weight:normal;letter-spacing:0.060px;"><b style="color:#a23fcb;font-size:12.5px;letter-spacing:0.02px">Kirsten Mccall</b> in Relationship Manager Name</div>
<div class="t" style="right:442.60px;top:625.10px;font-size:12.50px;color:#3a424e;font-weight:normal;letter-spacing:0.900px;">$760,153</div>
<div class="t" style="right:270.60px;top:625.10px;font-size:12.50px;color:#e8282f;font-weight:normal;letter-spacing:0.850px;">-$188,559</div>
<div class="t" style="right:141.60px;top:625.10px;font-size:12.50px;color:#e8282f;font-weight:normal;letter-spacing:0.850px;">-19.88%</div>
<svg class="r" style="left:1611.60px;top:622.58px;" width="6.00" height="14.00" viewBox="0 0 6.00 14.00"><circle cx="3" cy="2.5" r="0.95" fill="#3c4450"/><circle cx="3" cy="6.4" r="0.95" fill="#3c4450"/><circle cx="3" cy="10.3" r="0.95" fill="#3c4450"/></svg>
<div class="t" style="left:735.30px;top:648.56px;font-size:13.00px;color:#5d6876;font-weight:normal;letter-spacing:0.300px;">3.</div>
<div class="t" style="left:758.60px;top:648.56px;font-size:13.00px;color:#636d7b;font-weight:normal;letter-spacing:0.060px;"><b style="color:#a23fcb;font-size:12.5px;letter-spacing:0.02px">Hoodle Group</b> in Customer Name</div>
<div class="t" style="right:442.60px;top:649.38px;font-size:12.50px;color:#3a424e;font-weight:normal;letter-spacing:0.900px;">$161,601</div>
<div class="t" style="right:270.60px;top:649.38px;font-size:12.50px;color:#e8282f;font-weight:normal;letter-spacing:0.850px;">-$154,679</div>
<div class="t" style="right:141.60px;top:649.38px;font-size:12.50px;color:#e8282f;font-weight:normal;letter-spacing:0.850px;">-48.91%</div>
<svg class="r" style="left:1611.60px;top:646.86px;" width="6.00" height="14.00" viewBox="0 0 6.00 14.00"><circle cx="3" cy="2.5" r="0.95" fill="#3c4450"/><circle cx="3" cy="6.4" r="0.95" fill="#3c4450"/><circle cx="3" cy="10.3" r="0.95" fill="#3c4450"/></svg>
<div class="t" style="left:735.30px;top:672.84px;font-size:13.00px;color:#5d6876;font-weight:normal;letter-spacing:0.300px;">4.</div>
<div class="t" style="left:758.60px;top:672.84px;font-size:13.00px;color:#636d7b;font-weight:normal;letter-spacing:0.060px;"><b style="color:#a23fcb;font-size:12.5px;letter-spacing:0.02px">Bunbury</b> in City</div>
<div class="t" style="right:442.60px;top:673.66px;font-size:12.50px;color:#3a424e;font-weight:normal;letter-spacing:0.900px;">$111,820</div>
<div class="t" style="right:270.60px;top:673.66px;font-size:12.50px;color:#e8282f;font-weight:normal;letter-spacing:0.850px;">-$118,046</div>
<div class="t" style="right:141.60px;top:673.66px;font-size:12.50px;color:#e8282f;font-weight:normal;letter-spacing:0.850px;">-51.35%</div>
<svg class="r" style="left:1611.60px;top:671.14px;" width="6.00" height="14.00" viewBox="0 0 6.00 14.00"><circle cx="3" cy="2.5" r="0.95" fill="#3c4450"/><circle cx="3" cy="6.4" r="0.95" fill="#3c4450"/><circle cx="3" cy="10.3" r="0.95" fill="#3c4450"/></svg>
<div class="t" style="left:735.30px;top:697.12px;font-size:13.00px;color:#5d6876;font-weight:normal;letter-spacing:0.300px;">5.</div>
<div class="t" style="left:758.60px;top:697.12px;font-size:13.00px;color:#636d7b;font-weight:normal;letter-spacing:0.060px;"><b style="color:#a23fcb;font-size:12.5px;letter-spacing:0.02px">Furniture</b> in Category</div>
<div class="t" style="right:442.60px;top:697.94px;font-size:12.50px;color:#3a424e;font-weight:normal;letter-spacing:0.900px;">$690,129</div>
<div class="t" style="right:270.60px;top:697.94px;font-size:12.50px;color:#e8282f;font-weight:normal;letter-spacing:0.850px;">-$99,973</div>
<div class="t" style="right:141.60px;top:697.94px;font-size:12.50px;color:#e8282f;font-weight:normal;letter-spacing:0.850px;">-12.65%</div>
<svg class="r" style="left:1611.60px;top:695.42px;" width="6.00" height="14.00" viewBox="0 0 6.00 14.00"><circle cx="3" cy="2.5" r="0.95" fill="#3c4450"/><circle cx="3" cy="6.4" r="0.95" fill="#3c4450"/><circle cx="3" cy="10.3" r="0.95" fill="#3c4450"/></svg>
<div class="t" style="left:735.30px;top:721.40px;font-size:13.00px;color:#5d6876;font-weight:normal;letter-spacing:0.300px;">6.</div>
<div class="t" style="left:758.60px;top:721.40px;font-size:13.00px;color:#636d7b;font-weight:normal;letter-spacing:0.060px;"><b style="color:#a23fcb;font-size:12.5px;letter-spacing:0.02px">Organisers</b> in Sub Category</div>
<div class="t" style="right:442.60px;top:722.22px;font-size:12.50px;color:#3a424e;font-weight:normal;letter-spacing:0.900px;">$313,103</div>
<div class="t" style="right:270.60px;top:722.22px;font-size:12.50px;color:#e8282f;font-weight:normal;letter-spacing:0.850px;">-$79,567</div>
<div class="t" style="right:141.60px;top:722.22px;font-size:12.50px;color:#e8282f;font-weight:normal;letter-spacing:0.850px;">-20.26%</div>
<svg class="r" style="left:1611.60px;top:719.70px;" width="6.00" height="14.00" viewBox="0 0 6.00 14.00"><circle cx="3" cy="2.5" r="0.95" fill="#3c4450"/><circle cx="3" cy="6.4" r="0.95" fill="#3c4450"/><circle cx="3" cy="10.3" r="0.95" fill="#3c4450"/></svg>
<div class="t" style="left:716.50px;top:773.80px;font-size:13.00px;color:#262d38;font-weight:bold;letter-spacing:-0.160px;">Potential causes by Segment</div>
<div class="r" style="left:896.10px;top:773.90px;width:12.00px;height:12.00px;background:#8593a6;border-radius:50%"></div>
<div class="t" style="left:902.10px;transform:translateX(-50%);top:775.96px;font-size:9.50px;color:#ffffff;font-weight:bold;letter-spacing:0.000px;">i</div>
<div class="t" style="left:1493.30px;top:774.23px;font-size:11.30px;color:#6b7584;font-weight:normal;letter-spacing:0.100px;">Collapse all</div>
<div class="r" style="left:1562.00px;top:769.80px;width:1.00px;height:19.20px;background:#dde2e8"></div>
<div class="t" style="left:1573.30px;top:774.23px;font-size:11.30px;color:#6b7584;font-weight:normal;letter-spacing:-0.050px;">Expand all</div>
<div class="r" style="left:716.30px;top:802.70px;width:917.30px;height:60.00px;box-sizing:border-box;border:1px solid #dfe4ea;border-radius:3px;background:#fff"></div>
<div class="r" style="left:717.30px;top:844.60px;width:915.00px;height:1.00px;background:#e3e7ec"></div>
<svg class="r" style="left:730.00px;top:818.00px;" width="14.00" height="10.00" viewBox="0 0 14.00 10.00"><path d="M3.8,7.2 L7.3,3.7 L10.8,7.2" fill="none" stroke="#5d6876" stroke-width="1.3" stroke-linecap="round" stroke-linejoin="round"/></svg>
<div class="t" style="left:750.80px;top:816.97px;font-size:13.50px;color:#2f3845;font-weight:normal;letter-spacing:-0.050px;">Country</div>
<div class="t" style="left:1538.90px;top:818.43px;font-size:11.30px;color:#2f8af5;font-weight:normal;letter-spacing:0.100px;">Drill down</div>
<svg class="r" style="left:1592.00px;top:816.00px;" width="16.00" height="14.00" viewBox="0 0 16.00 14.00"><path d="M3.2,4.5 H9.5 V12.2 M6.4,9.2 L9.5,12.3 L12.6,9.2" fill="none" stroke="#2f8af5" stroke-width="1.5" stroke-linecap="round" stroke-linejoin="round"/></svg>
<svg class="r" style="left:0.00px;top:0.00px;pointer-events:none" width="1724.00" height="852.00" viewBox="0 0 1724.00 852.00"><line x1="1666.8" y1="571.2" x2="1639.3" y2="592.2" stroke="#ff2508" stroke-width="3.6" stroke-linecap="round"/><path d="M1623.5,604.0 L1633.3,584.3 L1645.3,600.1 Z" fill="#ff2508"/><line x1="1658.2" y1="790.1" x2="1630.5" y2="811.0" stroke="#ff2508" stroke-width="3.6" stroke-linecap="round"/><path d="M1614.9,822.3 L1624.7,803.2 L1636.3,818.7 Z" fill="#ff2508"/></svg>
<svg class="r" style="left:0;top:0;pointer-events:none" width="1724" height="852"><path d="M0,840 L1,840 A10.5,10.5 0 0 0 11.5,850.5 L11.5,852 L0,852 Z" fill="#2a2420"/><path d="M1724,845 A5.5,5.5 0 0 1 1718.5,850.5 L1724,850.5 Z" fill="#2a2420"/></svg>
<div class="r" style="left:0.00px;top:850.90px;width:1724.00px;height:1.10px;background:#161718"></div>
<div class="r" style="left:1.00px;top:818.00px;width:1723.00px;height:31.60px;background:linear-gradient(to bottom, rgba(20,25,35,0) 0%, rgba(20,25,35,0.03) 55%, rgba(20,25,35,0.09) 100%);pointer-events:none;-webkit-mask-image:linear-gradient(to right, transparent 0px, transparent 120px, #000 300px);mask-image:linear-gradient(to right, transparent 0px, transparent 120px, #000 300px)"></div>
<div class="r" style="left:200.00px;top:849.60px;width:1524.00px;height:1.30px;background:rgba(255,255,255,0.85)"></div>
</body></html>
